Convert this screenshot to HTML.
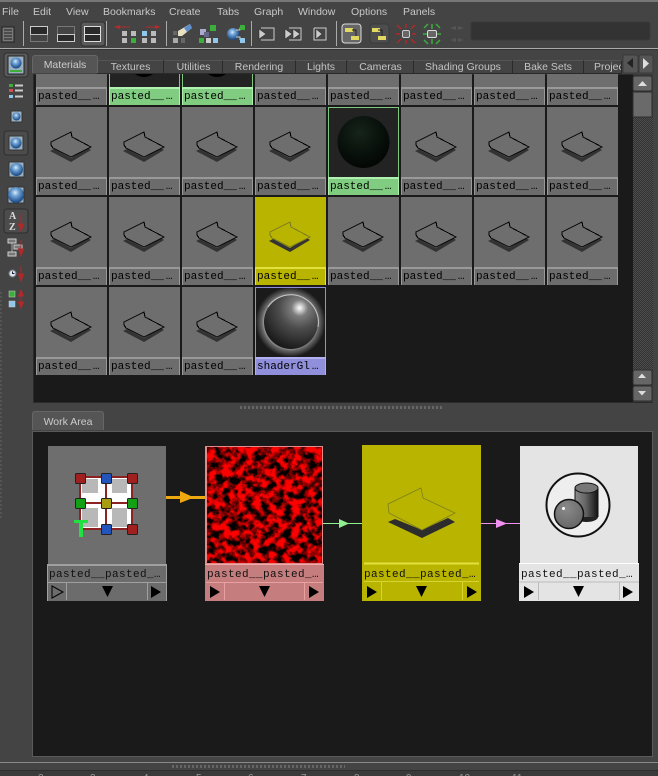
<!DOCTYPE html>
<html>
<head>
<meta charset="utf-8">
<style>
html,body{margin:0;padding:0;background:#444}
#p{position:relative;width:658px;height:776px;overflow:hidden;background:#444;font-family:"Liberation Sans",sans-serif}
#p div,#p span{position:absolute}
.m{top:6px;font-size:10.5px;color:#c8c8c8;line-height:13px;white-space:nowrap}
.t{top:60px;height:13px;background:#444;border-top:1px solid #555;border-right:1px solid #2a2a2a;font-size:10.5px;color:#c4c4c4;line-height:13px;text-align:center;white-space:nowrap;overflow:hidden}
.c{width:71px;height:88px;background:#6e6e6e}
.c svg{position:absolute;left:0;top:0}
.l{left:0;top:70px;width:68px;height:16px;background:#6c6c6c;border:solid #999;border-width:2px 1px 0 1px;font:11px/17px "Liberation Mono",monospace;color:#000;white-space:nowrap;overflow:hidden;padding-left:1px}
.l b{font-weight:normal;margin-left:2px}
.g{background:#232323}
.g .l{background:#80cc80;border-color:#b0f0b0}
.y{background:#b8b400}
.y .l{background:#b8b400;border-color:#e4e03c}
.nl{font:11px/14px "Liberation Mono",monospace;letter-spacing:.4px;color:#111;white-space:nowrap;overflow:hidden}
</style>
</head>
<body>
<div id="p">
<!-- backgrounds -->
<div style="left:0;top:0;width:658px;height:2px;background:#777"></div>
<div style="left:0;top:48px;width:658px;height:1px;background:#aaa"></div>
<div style="left:0;top:49px;width:658px;height:1px;background:#333"></div>

<span class="m" style="left:2px">File</span>
<span class="m" style="left:33px">Edit</span>
<span class="m" style="left:66px">View</span>
<span class="m" style="left:103px">Bookmarks</span>
<span class="m" style="left:169px">Create</span>
<span class="m" style="left:217px">Tabs</span>
<span class="m" style="left:254px">Graph</span>
<span class="m" style="left:298px">Window</span>
<span class="m" style="left:351px">Options</span>
<span class="m" style="left:403px">Panels</span>

<!-- upper panel -->
<div style="left:33px;top:74px;width:620px;height:329px;background:#1a1a1a;border:1px solid #2b2b2b;box-sizing:border-box"></div>

<!-- tabs -->
<div class="t" style="left:98px;width:65px">Textures</div>
<div class="t" style="left:165px;width:57px">Utilities</div>
<div class="t" style="left:223px;width:72px">Rendering</div>
<div class="t" style="left:296px;width:50px">Lights</div>
<div class="t" style="left:348px;width:65px">Cameras</div>
<div class="t" style="left:414px;width:98px">Shading Groups</div>
<div class="t" style="left:513px;width:70px">Bake Sets</div>
<div class="t" style="left:584px;width:38px;text-align:left;padding-left:10px;box-sizing:border-box">Projects</div>
<div style="left:32px;top:55px;width:64px;height:17px;background:#555;border:1px solid #666;border-bottom:none;border-radius:3px 3px 0 0;font-size:10.5px;line-height:18px;text-align:center;color:#ccc">Materials</div>
<div style="left:97px;top:73px;width:525px;height:1px;background:#2a2a2a"></div>

<svg width="0" height="0" style="position:absolute">
<defs>
<g id="sh">
<path d="M14 44L18 42L35 51L52 41L55 43L35 55Z" fill="#333"/>
<path d="M15 35L35 25L36 30L55 40L35 50L17 41L15 38Z" fill="none" stroke="#000" stroke-width="1" shape-rendering="crispEdges"/>
</g>
<g id="shy">
<path d="M14 44L18 42L35 51L52 41L55 43L35 55Z" fill="#333"/>
<path d="M15 35L35 25L36 30L55 40L35 50L17 41L15 38Z" fill="none" stroke="#7c7a20" stroke-width="1" shape-rendering="crispEdges"/>
</g>
<radialGradient id="ball" cx=".42" cy=".32" r=".8"><stop offset="0" stop-color="#16241a"/><stop offset=".5" stop-color="#09120c"/><stop offset="1" stop-color="#010201"/></radialGradient>
<radialGradient id="glow" cx=".66" cy=".24" r=".95"><stop offset="0" stop-color="#fff"/><stop offset=".05" stop-color="#d8d8d8"/><stop offset=".16" stop-color="#7c7c7c"/><stop offset=".4" stop-color="#4c4c4c"/><stop offset=".78" stop-color="#1e1e1e"/><stop offset="1" stop-color="#0a0a0a"/></radialGradient>
<radialGradient id="halo" cx=".5" cy=".5" r=".5"><stop offset=".74" stop-color="#aaa"/><stop offset=".82" stop-color="#666"/><stop offset="1" stop-color="#1a1a1a"/></radialGradient>
<radialGradient id="blue" cx=".45" cy=".35" r=".7"><stop offset="0" stop-color="#dcecf8"/><stop offset=".3" stop-color="#76a8d8"/><stop offset=".75" stop-color="#2c5f9c"/><stop offset="1" stop-color="#163a66"/></radialGradient>
<linearGradient id="cyl" x1="0" x2="1"><stop offset="0" stop-color="#8a8a8a"/><stop offset=".45" stop-color="#666"/><stop offset="1" stop-color="#111"/></linearGradient>
<radialGradient id="gs" cx=".4" cy=".3" r=".8"><stop offset="0" stop-color="#8a8a8a"/><stop offset="1" stop-color="#626262"/></radialGradient>
<filter id="noise" x="0" y="0" width="100%" height="100%" color-interpolation-filters="sRGB"><feTurbulence type="fractalNoise" baseFrequency="0.13" numOctaves="4" seed="7"/><feColorMatrix values="3.200 0 0 0 -1.050  0 0 0 0 0  0 0 0 0 0  0 0 0 0 1"/></filter>
<pattern id="dith" width="2" height="2" patternUnits="userSpaceOnUse"><rect width="2" height="2" fill="#333"/><rect width="1" height="1" fill="#4c4c4c"/><rect x="1" y="1" width="1" height="1" fill="#4c4c4c"/></pattern>
<pattern id="hd" width="4" height="3" patternUnits="userSpaceOnUse"><rect width="2" height="3" fill="#666"/></pattern>
<pattern id="vd" width="3" height="4" patternUnits="userSpaceOnUse"><rect width="2" height="2" fill="#666"/></pattern>
</defs>
</svg>

<!-- top partial row -->
<div class="c" style="left:36px;top:74px;height:31px"><div class="l" style="top:13px">pasted__<b>…</b></div></div>
<div class="c g" style="left:109px;top:74px;height:31px"><svg width="71" height="14"><ellipse cx="35" cy="-10" rx="14" ry="13" fill="#000"/><path d="M.5 0V14M70.500 0V14" stroke="#7fc67f"/></svg><div class="l" style="top:13px">pasted__<b>…</b></div></div>
<div class="c g" style="left:182px;top:74px;height:31px"><svg width="71" height="14"><ellipse cx="35" cy="-10" rx="14" ry="13" fill="#000"/><path d="M.5 0V14M70.500 0V14" stroke="#7fc67f"/></svg><div class="l" style="top:13px">pasted__<b>…</b></div></div>
<div class="c" style="left:255px;top:74px;height:31px"><div class="l" style="top:13px">pasted__<b>…</b></div></div>
<div class="c" style="left:328px;top:74px;height:31px"><div class="l" style="top:13px">pasted__<b>…</b></div></div>
<div class="c" style="left:401px;top:74px;height:31px"><div class="l" style="top:13px">pasted__<b>…</b></div></div>
<div class="c" style="left:474px;top:74px;height:31px"><div class="l" style="top:13px">pasted__<b>…</b></div></div>
<div class="c" style="left:547px;top:74px;height:31px"><div class="l" style="top:13px">pasted__<b>…</b></div></div>

<!-- row 2 -->
<div class="c" style="left:36px;top:107px"><svg width="71" height="70"><use href="#sh"/></svg><div class="l">pasted__<b>…</b></div></div>
<div class="c" style="left:109px;top:107px"><svg width="71" height="70"><use href="#sh"/></svg><div class="l">pasted__<b>…</b></div></div>
<div class="c" style="left:182px;top:107px"><svg width="71" height="70"><use href="#sh"/></svg><div class="l">pasted__<b>…</b></div></div>
<div class="c" style="left:255px;top:107px"><svg width="71" height="70"><use href="#sh"/></svg><div class="l">pasted__<b>…</b></div></div>
<div class="c g" style="left:328px;top:107px"><svg width="71" height="70"><rect x=".5" y=".5" width="70" height="70" fill="#232323" stroke="#7fc67f"/><circle cx="35.500" cy="35" r="26" fill="url(#ball)"/></svg><div class="l">pasted__<b>…</b></div></div>
<div class="c" style="left:401px;top:107px"><svg width="71" height="70"><use href="#sh"/></svg><div class="l">pasted__<b>…</b></div></div>
<div class="c" style="left:474px;top:107px"><svg width="71" height="70"><use href="#sh"/></svg><div class="l">pasted__<b>…</b></div></div>
<div class="c" style="left:547px;top:107px"><svg width="71" height="70"><use href="#sh"/></svg><div class="l">pasted__<b>…</b></div></div>

<!-- row 3 -->
<div class="c" style="left:36px;top:197px"><svg width="71" height="70"><use href="#sh"/></svg><div class="l">pasted__<b>…</b></div></div>
<div class="c" style="left:109px;top:197px"><svg width="71" height="70"><use href="#sh"/></svg><div class="l">pasted__<b>…</b></div></div>
<div class="c" style="left:182px;top:197px"><svg width="71" height="70"><use href="#sh"/></svg><div class="l">pasted__<b>…</b></div></div>
<div class="c y" style="left:255px;top:197px"><svg width="71" height="70"><use href="#shy"/></svg><div class="l">pasted__<b>…</b></div></div>
<div class="c" style="left:328px;top:197px"><svg width="71" height="70"><use href="#sh"/></svg><div class="l">pasted__<b>…</b></div></div>
<div class="c" style="left:401px;top:197px"><svg width="71" height="70"><use href="#sh"/></svg><div class="l">pasted__<b>…</b></div></div>
<div class="c" style="left:474px;top:197px"><svg width="71" height="70"><use href="#sh"/></svg><div class="l">pasted__<b>…</b></div></div>
<div class="c" style="left:547px;top:197px"><svg width="71" height="70"><use href="#sh"/></svg><div class="l">pasted__<b>…</b></div></div>

<!-- row 4 -->
<div class="c" style="left:36px;top:287px"><svg width="71" height="70"><use href="#sh"/></svg><div class="l">pasted__<b>…</b></div></div>
<div class="c" style="left:109px;top:287px"><svg width="71" height="70"><use href="#sh"/></svg><div class="l">pasted__<b>…</b></div></div>
<div class="c" style="left:182px;top:287px"><svg width="71" height="70"><use href="#sh"/></svg><div class="l">pasted__<b>…</b></div></div>
<div class="c" style="left:255px;top:287px;background:#1a1a1a"><svg width="71" height="70"><rect x=".5" y=".5" width="70" height="70" fill="#1a1a1a" stroke="#8f8fdc"/><circle cx="35.500" cy="35" r="35" fill="url(#halo)"/><circle cx="36" cy="35" r="27" fill="url(#glow)"/><path d="M13 20A27.500 27.500 0 0 1 60 22A27.500 27.500 0 0 1 63 40" fill="none" stroke="#c8c8c8" stroke-width="1"/><rect x=".5" y=".5" width="70" height="70" fill="none" stroke="#8f8fdc"/></svg><div class="l" style="background:#8f8fdc;border-color:#b0b0f0">shaderGl<b>…</b></div></div>

<!-- scrollbar -->
<div style="left:633px;top:74px;width:20px;height:328px;background:#3a3a3a"></div>

<!-- lower panel -->
<div style="left:32px;top:431px;width:621px;height:326px;background:#1a1a1a;border:1px solid #5a5a5a;box-sizing:border-box"></div>
<div style="left:32px;top:411px;width:72px;height:19px;background:#555;border:1px solid #666;border-bottom:none;border-radius:3px 3px 0 0;font-size:10.5px;line-height:20px;text-align:center;color:#ccc;box-sizing:border-box">Work Area</div>

<!-- nodes -->
<div style="left:48px;top:446px;width:118px;height:118px;background:#6e6e6e"></div>
<div style="left:47px;top:564px;width:120px;height:37px;background:#6c6c6c;box-sizing:border-box;border:solid #a0a0a0;border-width:2px 1px 0 1px"></div>
<div class="nl" style="left:49px;top:568px;width:116px">pasted__pasted_…</div>

<div style="left:205px;top:446px;width:118px;height:119px;background:#e08a8a"></div>
<div style="left:205px;top:564px;width:119px;height:37px;background:#c67d7d;border-top:1px solid #f0a8a8;box-sizing:border-box"></div>
<div class="nl" style="left:207px;top:568px;width:115px">pasted__pasted_…</div>

<div style="left:362px;top:445px;width:119px;height:156px;background:#b8b400"></div>
<div class="nl" style="left:364px;top:568px;width:116px">pasted__pasted_…</div>

<div style="left:520px;top:446px;width:118px;height:118px;background:#e4e4e4"></div>
<div style="left:519px;top:563px;width:120px;height:38px;background:#e4e4e4;border-top:1px solid #fff;box-sizing:border-box"></div>
<div class="nl" style="left:521px;top:568px;width:116px">pasted__pasted_…</div>

<!-- drawing overlay -->
<svg width="658" height="776" style="position:absolute;left:0;top:0">
<!-- scrollbar parts -->
<rect x="633" y="117" width="20" height="253" fill="url(#dith)"/>
<rect x="633" y="76" width="19" height="15" rx="2" fill="#666" stroke="#2e2e2e"/>
<path d="M638 86L642.500 81L647 86Z" fill="#ddd"/>
<rect x="633" y="92" width="19" height="25" fill="#6a6a6a" stroke="#2e2e2e"/>
<rect x="633" y="370" width="19" height="15" rx="2" fill="#666" stroke="#2e2e2e"/>
<path d="M638 378L642 373.500L646 378Z" fill="#ddd"/>
<rect x="633" y="386" width="19" height="15" rx="2" fill="#666" stroke="#2e2e2e"/>
<path d="M638 391L646 391L642 395.500Z" fill="#ddd"/>
<!-- tab scroll -->
<rect x="623" y="55" width="15" height="18" rx="2" fill="#555" stroke="#3a3a3a"/>
<path d="M633 58L633 68L627 63Z" fill="#222"/>
<rect x="639" y="55" width="14" height="18" rx="2" fill="#555" stroke="#3a3a3a"/>
<path d="M643 58L643 69L649 63.500Z" fill="#ddd"/>

<!-- toolbar separators -->
<path d="M23.500 21V46M106.500 21V46M166.500 21V46M251.500 21V46M336.500 21V46" stroke="#aaa"/>
<!-- list icon -->
<rect x="2" y="27" width="12" height="15" fill="#777" stroke="#222"/>
<path d="M4 30H12M4 33H12M4 36H12M4 39H12" stroke="#222"/>
<!-- layouts -->
<rect x="30.500" y="26.500" width="17" height="8" fill="#2a2a2a" stroke="#ccc"/>
<rect x="30.500" y="34.500" width="17" height="7" fill="none" stroke="#aaa" stroke-dasharray="1 1"/>
<rect x="57.500" y="26.500" width="17" height="8" fill="none" stroke="#aaa" stroke-dasharray="1 1"/>
<rect x="57.500" y="34.500" width="17" height="7" fill="#2a2a2a" stroke="#ccc"/>
<rect x="81" y="22" width="24" height="24" rx="3" fill="#5a5a5a" stroke="#2e2e2e"/>
<rect x="84.500" y="26.500" width="16" height="15" fill="#2a2a2a" stroke="#ddd"/>
<path d="M84 34.500H101" stroke="#ddd"/>
<!-- arrows/graph -->
<path d="M114 27L120 25V26.500H130V27.500H120V29Z" fill="#b52a2a"/>
<path d="M161 27L155 25V26.500H146V27.500H155V29Z" fill="#b52a2a"/>
<g fill="#bbb"><rect x="122" y="31" width="5" height="5"/><rect x="131" y="31" width="5" height="5"/><rect x="122" y="38" width="5" height="5"/></g>
<rect x="131" y="38" width="5" height="5" fill="#3cae3c"/>
<rect x="142" y="31" width="5" height="5" fill="#8ec8ec"/>
<g fill="#bbb"><rect x="151" y="31" width="5" height="5"/><rect x="142" y="38" width="5" height="5"/><rect x="151" y="38" width="5" height="5"/></g>
<!-- eraser -->
<g fill="#666"><rect x="173" y="31" width="4" height="4"/><rect x="173" y="38" width="5" height="5" fill="#aaa"/><rect x="181" y="38" width="4" height="5"/></g>
<path d="M178 31L190 24L192 28L182 36L178 36Z" fill="#e8e0c0"/>
<path d="M184 28L190 24L192 28L187 32Z" fill="#5a8ecc"/>
<!-- select nodes -->
<rect x="200" y="29" width="6" height="6" fill="#aac"/><rect x="204" y="32" width="5" height="5" fill="#668"/>
<rect x="210" y="25" width="6" height="6" fill="#3cae3c"/>
<rect x="199" y="38" width="5" height="5" fill="#3cae3c"/><rect x="206" y="38" width="5" height="5" fill="#ccc"/><rect x="213" y="38" width="5" height="5" fill="#8ec8ec"/>
<!-- sphere node -->
<circle cx="233" cy="34" r="6" fill="url(#blue)"/>
<path d="M236 30H240V27.500M236 37H240V40" fill="none" stroke="#ccc"/>
<rect x="240" y="25" width="5" height="5" fill="#3cae3c"/><rect x="240" y="38" width="5" height="5" fill="#8ec8ec"/>
<!-- play boxes -->
<path d="M261 28H274V40H261" fill="none" stroke="#ccc"/><path d="M259 29L266 34L259 39Z" fill="#ccc" stroke="#222" stroke-width=".5"/>
<path d="M289 28H301V40H289" fill="none" stroke="#ccc"/><path d="M285 29L292 34L285 39Z M293 29L300 34L293 39Z" fill="#ccc" stroke="#222" stroke-width=".5"/>
<path d="M314 28H326V40H314V28" fill="none" stroke="#ccc"/><path d="M316 29L322 34L316 39Z" fill="#ccc" stroke="#222" stroke-width=".5"/>
<!-- toggles -->
<rect x="342" y="24" width="19" height="19" rx="3" fill="#666" stroke="#ddd"/>
<rect x="345" y="28" width="8" height="4" fill="#e0d860"/><rect x="351" y="36" width="8" height="4" fill="#e0d860"/><path d="M352 30H356V36" fill="none" stroke="#222"/>
<rect x="370" y="24" width="19" height="19" rx="3" fill="#4d4d4d" stroke="#3a3a3a"/>
<rect x="372" y="28" width="8" height="4" fill="#e0d860"/><rect x="378" y="36" width="8" height="4" fill="#e0d860"/><path d="M378 30H382V36" fill="none" stroke="#222"/>
<!-- red arrows -->
<g stroke="#b02828" stroke-width="1.500" fill="none"><path d="M397 25L401 29M415 25L411 29M397 43L401 39M415 43L411 39M406 24V28M406 44V40M396 34H400M416 34H412"/></g>
<rect x="402.500" y="30.500" width="7" height="7" rx="1.500" fill="#666" stroke="#ccc"/>
<g stroke="#3cae3c" stroke-width="1.500" fill="none"><path d="M424 28L428 24M440 28L436 24M424 40L428 44M440 40L436 44M432 24V29M432 44V39M423 34H427M441 34H437"/></g>
<rect x="427.500" y="30.500" width="9" height="7" rx="1.500" fill="#666" stroke="#ddd"/>
<path d="M450 28L456 26L456 30ZM450 40L456 42L456 38ZM464 28L458 26L458 30ZM464 40L458 42L458 38Z" fill="#555"/>
<rect x="471" y="22" width="179" height="18" rx="2" fill="#333" stroke="#3a3a3a"/>

<!-- left toolbar -->
<rect x="4" y="53" width="24" height="24" rx="3" fill="#5a5a5a" stroke="#2e2e2e"/>
<rect x="8" y="56" width="16" height="18" fill="#9ab0c0" stroke="#222"/>
<circle cx="16" cy="63" r="5.500" fill="url(#blue)"/><rect x="10" y="70" width="12" height="2" fill="#3cae3c"/>
<g fill="#3cae3c"><rect x="9" y="84" width="4" height="3"/></g><rect x="9" y="89" width="4" height="3" fill="#d05050"/><rect x="9" y="95" width="4" height="3" fill="#8ec8ec"/>
<path d="M15 85.500H23M15 90.500H23M15 96.500H23" stroke="#ccc" stroke-width="2"/>
<rect x="11" y="111" width="11" height="11" fill="#9ab0c0" stroke="#333"/><circle cx="16.500" cy="116.500" r="4" fill="url(#blue)"/>
<rect x="4" y="131" width="24" height="24" rx="3" fill="#4c4c4c" stroke="#2e2e2e"/>
<rect x="9" y="136" width="14" height="14" fill="#9ab0c0" stroke="#333"/><circle cx="16" cy="143" r="5.500" fill="url(#blue)"/>
<rect x="9" y="162" width="15" height="15" fill="#9ab0c0" stroke="#333"/><circle cx="16.500" cy="169.500" r="6.500" fill="url(#blue)"/>
<rect x="8" y="187" width="16" height="16" fill="#9ab0c0" stroke="#333"/><circle cx="16" cy="195" r="8" fill="url(#blue)"/>
<rect x="4" y="209" width="24" height="24" rx="3" fill="#4c4c4c" stroke="#2e2e2e"/>
<text x="9" y="219" font-family="Liberation Serif" font-weight="bold" font-size="10" fill="#ddd">A</text>
<text x="9" y="230" font-family="Liberation Serif" font-weight="bold" font-size="10" fill="#ddd">Z</text>
<path d="M21 214V230M18.500 224L21 231L23.500 224Z" stroke="#b02828" fill="#b02828"/>
<path d="M12 243V253" stroke="#aaa"/><rect x="8" y="239" width="8" height="4" fill="#777" stroke="#ccc"/><rect x="14" y="245" width="8" height="4" fill="#777" stroke="#ccc"/><rect x="8" y="252" width="8" height="4" fill="#777" stroke="#ccc"/>
<path d="M21 240V256M18.500 249L21 256L23.500 249Z" stroke="#b02828" fill="#b02828"/>
<circle cx="12.500" cy="273.500" r="3.500" fill="#d8e4f0" stroke="#777"/><path d="M12.500 271.500V273.500H14.500" stroke="#223" fill="none"/>
<path d="M21 266V280M18.500 274L21 281L23.500 274Z" stroke="#b02828" fill="#b02828"/>
<rect x="9" y="291" width="6" height="6" fill="#3cae3c" stroke="#ccc" stroke-width=".5"/><rect x="9" y="301" width="6" height="6" fill="#8ec8ec" stroke="#ccc" stroke-width=".5"/>
<path d="M21 292V306M18.500 296L21 290L23.500 296ZM18.500 302L21 308L23.500 302Z" stroke="#b02828" fill="#b02828"/>
<rect x="0" y="290" width="3" height="230" fill="url(#vd)" opacity=".5"/>

<!-- handles -->
<rect x="238" y="406" width="204" height="3" fill="url(#hd)"/>
<rect x="172" y="765" width="173" height="3" fill="url(#hd)"/>

<!-- node 1 -->
<g stroke="#a0a0a0" fill="none"><path d="M47.500 582.500H166.500M66.500 583V600M147.500 583V600"/></g>
<path d="M52 586V598L63 592Z" fill="none" stroke="#000"/>
<path d="M102 586H113L107.500 597Z"/>
<path d="M151 586V598L161 592Z"/>
<g>
<rect x="80" y="477" width="52" height="52" fill="#fff"/>
<rect x="82" y="479" width="16" height="14" fill="#b8b8b8"/><rect x="112" y="479" width="15" height="14" fill="#b8b8b8"/>
<rect x="82" y="508" width="16" height="19" fill="#b8b8b8"/><rect x="112" y="508" width="15" height="19" fill="#b8b8b8"/>
<path d="M80 477H132V529H80ZM80 503H132M106 477V529" fill="none" stroke="#8c2222" stroke-width="2"/>
<g stroke="#222" stroke-width="1">
<rect x="75.500" y="473.500" width="10" height="10" rx="1" fill="#a02020"/><rect x="101.500" y="473.500" width="10" height="10" rx="1" fill="#2255bb"/><rect x="127.500" y="473.500" width="10" height="10" rx="1" fill="#a02020"/>
<rect x="75.500" y="498.500" width="10" height="10" rx="1" fill="#14a014"/><rect x="101.500" y="498.500" width="10" height="10" rx="1" fill="#a89c10"/><rect x="127.500" y="498.500" width="10" height="10" rx="1" fill="#14a014"/>
<rect x="101.500" y="524.500" width="10" height="10" rx="1" fill="#2255bb"/><rect x="127.500" y="524.500" width="10" height="10" rx="1" fill="#a02020"/>
</g>
<path d="M74 520H88V523H83V537H79V523H74Z" fill="#22e040"/>
</g>

<!-- connection 1 -->
<path d="M166 497.500H205" stroke="#f0a810" stroke-width="3"/>
<path d="M180 491V503L194 497.500Z" fill="#f0a810"/>

<!-- node 2 -->
<rect x="207" y="447" width="115" height="116" filter="url(#noise)"/>
<path d="M206 582.500H323M224.500 583V600M304.500 583V600" stroke="#e8a0a0"/>
<path d="M210 586V598L220 592Z"/><path d="M259 586H270L264.500 597Z"/><path d="M309 586V598L319 592Z"/>

<!-- connection 2 -->
<path d="M323 523.500H362" stroke="#90f090"/>
<path d="M339 519V528L349 523.500Z" fill="#90f090"/>

<!-- node 3 -->
<path d="M364 563.500H479" stroke="#e4e03c" stroke-width="2"/>
<path d="M364 581.500H479M381.500 582V600M462.500 582V600" stroke="#d8d430"/>
<path d="M388 522L395 519L422 530L448 518L455 522L422 538Z" fill="#2c2c2c"/>
<path d="M388 504L421 488L423 498L455 513L422 530L389 513Z" fill="none" stroke="#807e20" stroke-width=".8"/>
<path d="M367 586V598L377 592Z"/><path d="M416 586H427L421.500 597Z"/><path d="M467 586V598L477 592Z"/>

<!-- connection 3 -->
<path d="M481 523.500H520" stroke="#f090f0"/>
<path d="M496 519V528L507 523.500Z" fill="#f090f0"/>

<!-- node 4 -->
<path d="M519.500 582H639M538.500 582V600M619.500 582V600" stroke="#bbb"/>
<circle cx="578" cy="505" r="31.500" fill="#eee" stroke="#111" stroke-width="2"/>
<ellipse cx="586.500" cy="517" rx="11.500" ry="5" fill="#222"/>
<rect x="575" y="488" width="23" height="29" fill="url(#cyl)"/>
<ellipse cx="586.500" cy="488" rx="11.500" ry="5" fill="#777" stroke="#111"/>
<path d="M575 488V517M598 488V517" stroke="#111"/>
<circle cx="569" cy="514" r="14.500" fill="url(#gs)" stroke="#111" stroke-width="1.500"/>
<circle cx="563.500" cy="508.500" r="1.500" fill="#fff"/>
<path d="M524 586V598L534 592Z"/><path d="M573 586H584L578.500 597Z"/><path d="M623 586V598L633 592Z"/>

<!-- bottom strip -->
<rect x="0" y="762" width="658" height="1" fill="#8a8a8a"/>
<rect x="0" y="770" width="658" height="1" fill="#2e2e2e"/>
<rect x="0" y="771" width="658" height="5" fill="#3a3a3a"/>
</svg>

<!-- ruler numbers, clipped at bottom edge -->
<div style="left:0;top:771px;width:658px;height:5px;overflow:hidden;font-size:10px;line-height:12px;color:#999">
<span style="left:38px;top:2px">2</span><span style="left:90px;top:2px">3</span><span style="left:143px;top:2px">4</span><span style="left:196px;top:2px">5</span><span style="left:248px;top:2px">6</span><span style="left:301px;top:2px">7</span><span style="left:354px;top:2px">8</span><span style="left:406px;top:2px">9</span><span style="left:459px;top:2px">10</span><span style="left:512px;top:2px">11</span>
</div>
</div>
</body>
</html>
